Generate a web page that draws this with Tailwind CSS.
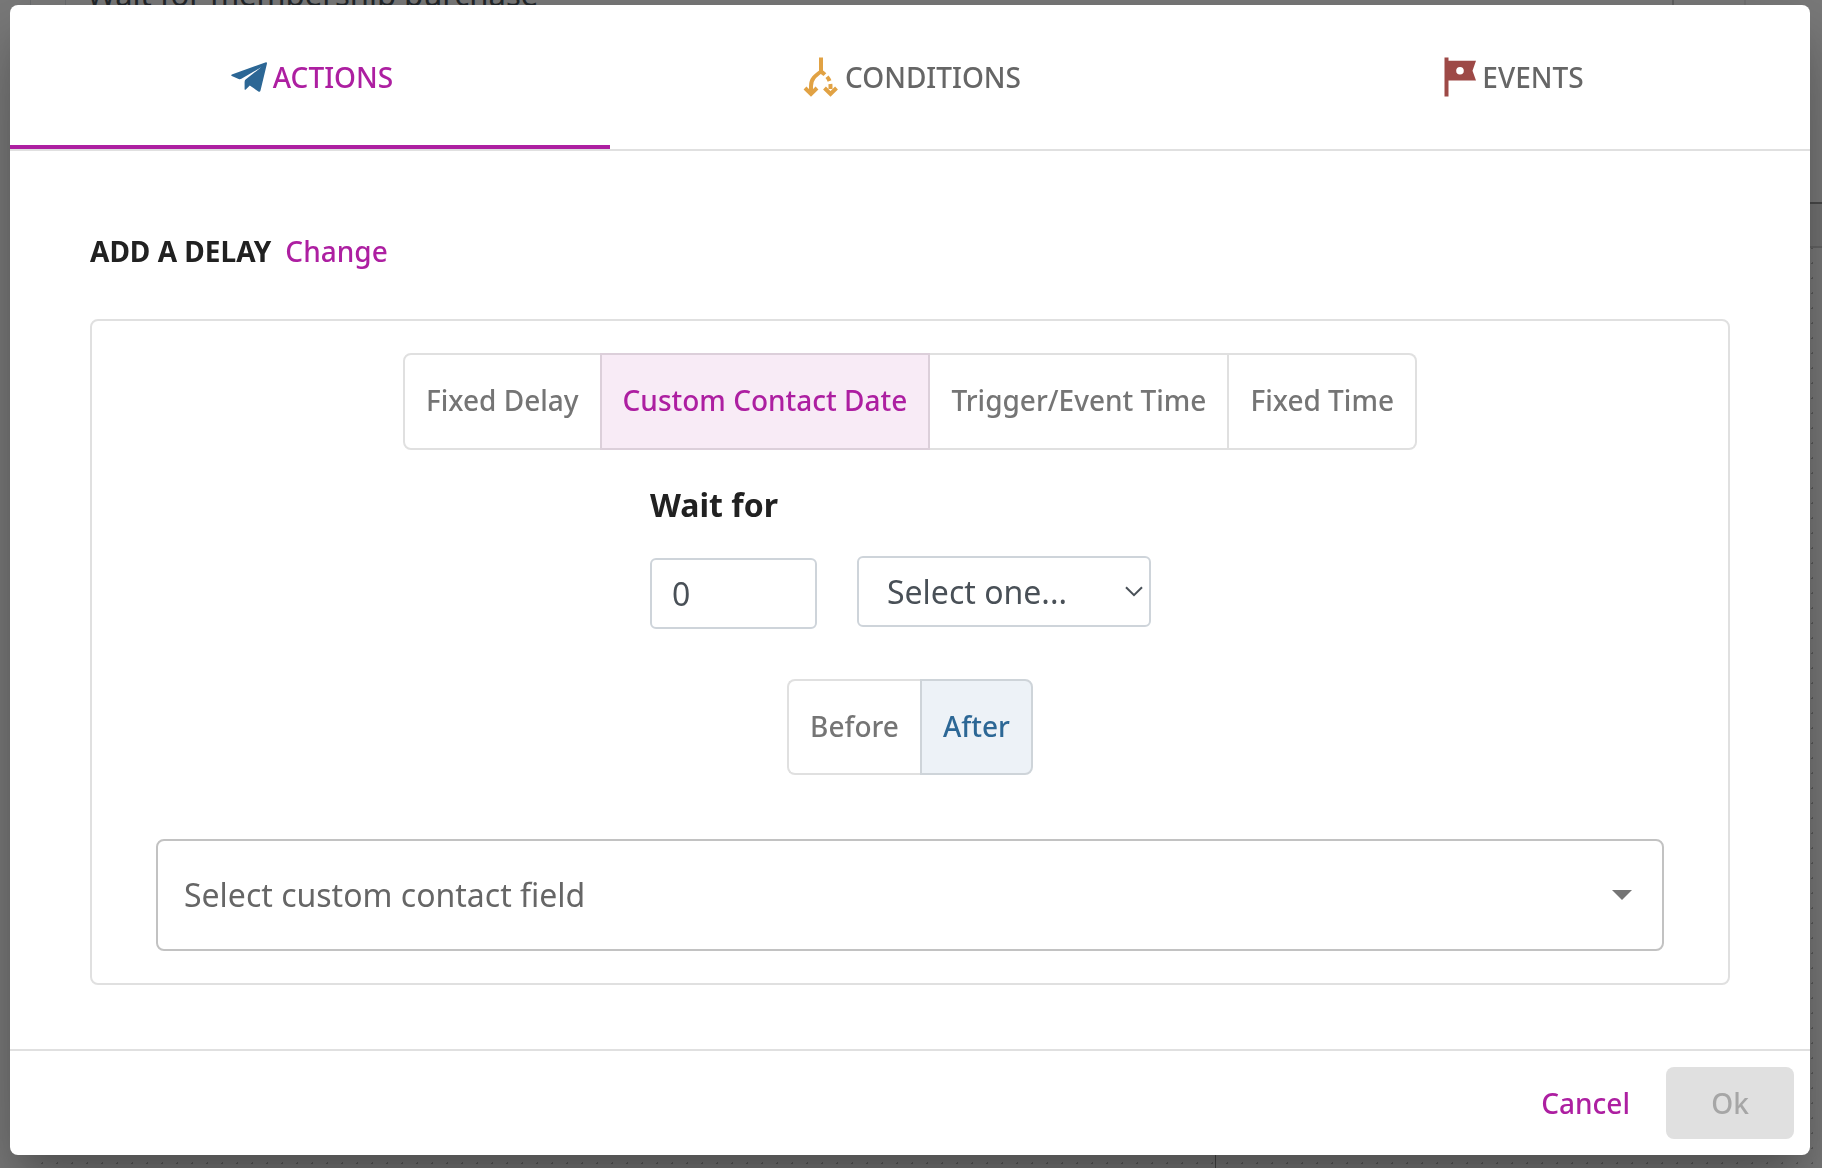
<!DOCTYPE html>
<html lang="en">
<head>
    <meta charset="UTF-8">
    <meta name="viewport" content="width=device-width, initial-scale=1.0">
    <title>Add a delay</title>
    <script src="https://cdn.jsdelivr.net/npm/@tailwindcss/browser@4"></script>
</head>
<body class="min-h-screen bg-[#7b7b7b] font-['Noto_Sans',sans-serif] text-[28px] leading-10 font-medium text-[#212121]">

    <!-- Workflow canvas behind the dialog -->
    <div class="fixed inset-y-0 right-0 left-[30px] overflow-hidden bg-[radial-gradient(circle,#5c5c5c_1px,transparent_1px)] bg-size-[15px_15px] bg-position-[5px_1px]" aria-hidden="true">
        <div class="absolute inset-x-0 top-0 h-[204px] border-b-2 border-[#4a4a4a] bg-[#7b7b7b]"></div>
        <div class="absolute inset-x-0 top-[204px] h-11 border-b-2 border-[#666] bg-[#757575]"></div>
        <div class="absolute top-0 left-0 h-40 w-9 border-x border-[#6c6e70]"></div>
        <div class="absolute top-0 right-[76px] h-40 w-[74px] border-x-2 border-r-[#727272] border-l-[#636363]"></div>
        <div class="absolute bottom-0 left-[1185px] h-10 w-px bg-[#484848]"></div>
        <p class="absolute -top-[26px] left-[57px] text-[31px] leading-10 font-normal text-[#24282b]">Wait for membership purchase</p>
    </div>

    <!-- Dialog -->
    <div role="dialog" aria-labelledby="dialogTitle" class="relative flex min-h-screen pt-[5px] pr-3 pb-[13px] pl-[10px]">
        <div class="flex grow flex-col rounded-lg bg-white shadow-[0_22px_30px_-14px_#00000033,0_48px_76px_6px_#00000024,0_18px_92px_16px_#0000001f]">

            <!-- Tabs -->
            <div role="tablist" class="grid h-[146px] grid-cols-3 border-b-2 border-[#e0e0e0] text-[#666]">
                <button role="tab" aria-selected="true" class="flex items-center justify-center gap-[6px] border-b-4 border-[#ad1fa1] pt-1 text-[#ad1fa1]">
                    <svg class="h-[30px] w-10" viewBox="-4 0 40 30" fill="#2c6795">
                        <path d="M35 0.2 L0.8 12.4 Q-0.3 13.2 0.8 14 L8.2 17.2 Q9.4 17.4 10.4 16.8 L30.2 5.2 L14.6 17.6 Q13.6 18.6 13.6 20 V27.2 Q13.9 28.4 14.8 27.4 L18.8 23.6 L27.4 29.4 Q29 30.2 29.5 28.4 L36 1.4 Q36 0 35 0.2 Z"/>
                    </svg>
                    ACTIONS
                </button>
                <button role="tab" aria-selected="false" class="flex items-center justify-center gap-[6px] border-b-4 border-transparent pt-1">
                    <svg class="h-10 w-10" viewBox="-4 0 40 40" fill="none" stroke="#e1a244" stroke-width="4">
                        <path d="M18 0.5 V14.5 C12 19 8 22 8 29 V36"/>
                        <path d="M2 31 L8 37 L14 31"/>
                        <path d="M18 14.5 Q27.5 21 27.5 29 V36" stroke-dasharray="5 3"/>
                        <path d="M21.5 31 L27.5 37 L33.5 31"/>
                    </svg>
                    CONDITIONS
                </button>
                <button role="tab" aria-selected="false" class="flex items-center justify-center gap-[6px] border-b-4 border-transparent pt-1">
                    <svg class="h-10 w-10" viewBox="-8 0 40 40" fill="#9d4946">
                        <path fill-rule="evenodd" d="M0.5 0.5 H4.5 V3.8 H32 L28.5 13.7 L32 23.6 H4.5 V39.5 H0.5 Z M16 10 A3.8 3.8 0 1 0 16 17.6 A3.8 3.8 0 1 0 16 10 Z"/>
                    </svg>
                    EVENTS
                </button>
            </div>

            <!-- Content -->
            <div class="flex grow flex-col px-20 pt-20 pb-16">
                <div class="flex items-center gap-[14px]">
                    <h1 id="dialogTitle" class="font-bold">ADD A DELAY</h1>
                    <button class="text-[#ad1fa1]">Change</button>
                </div>

                <div class="mt-12 flex flex-col items-center rounded-lg border-2 border-[#e0e0e0] px-16 py-8">
                    <div role="group" aria-label="Delay type" class="flex h-[97px] text-[#757575]">
                        <button class="rounded-l-lg border-2 border-[#e0e0e0] px-[21px] pb-[3px]">Fixed Delay</button>
                        <button aria-pressed="true" class="-ml-[2px] border-2 border-[#dccfda] bg-[#f8ebf6] px-[21px] pb-[3px] text-[#ad1fa1]">Custom Contact Date</button>
                        <button class="border-y-2 border-r-2 border-[#e0e0e0] px-[21px] pb-[3px]">Trigger/Event Time</button>
                        <button class="rounded-r-lg border-y-2 border-r-2 border-[#e0e0e0] px-[21px] pb-[3px]">Fixed Time</button>
                    </div>

                    <div class="mt-[31px] w-[520px] text-[32px] font-normal text-[#495057]">
                        <label for="waitAmount" class="block leading-12 font-bold text-[#212121]">Wait for</label>
                        <div class="mt-[27px] flex items-start gap-10">
                            <input id="waitAmount" type="text" inputmode="numeric" value="0" class="mt-[2px] h-[71px] w-[167px] rounded-md border-2 border-[#ced4da] px-5">
                            <div class="relative">
                                <select aria-label="Unit" class="h-[71px] w-[294px] appearance-none rounded-md border-2 border-[#ced4da] bg-white px-7">
                                    <option>Select one...</option>
                                    <option>Days</option>
                                </select>
                                <svg class="pointer-events-none absolute top-[30px] right-2 h-[11px] w-[18px]" viewBox="0 0 18 11" fill="none" stroke="#495057" stroke-width="2">
                                    <path d="M1 1.2 L9 9.2 L17 1.2"/>
                                </svg>
                            </div>
                        </div>
                    </div>

                    <div role="group" aria-label="Direction" class="mt-[50px] flex h-24 text-[#757575]">
                        <button class="rounded-l-lg border-y-2 border-l-2 border-[#e0e0e0] px-[21px] pb-[2px]">Before</button>
                        <button aria-pressed="true" class="rounded-r-lg border-2 border-[#ced4d9] bg-[#edf2f7] px-[21px] pb-[2px] text-[#2c6795]">After</button>
                    </div>

                    <div class="relative mt-16 w-full">
                        <select aria-label="Custom contact field" class="h-28 w-full appearance-none rounded-lg border-2 border-[#c2c2c2] bg-white px-[26px] text-[32px] font-normal text-[#666]">
                            <option>Select custom contact field</option>
                        </select>
                        <svg class="pointer-events-none absolute top-[51px] right-8 h-[10px] w-5" viewBox="0 0 20 10" fill="#757575">
                            <path d="M0 0 H20 L10 10 Z"/>
                        </svg>
                    </div>
                </div>
            </div>

            <!-- Footer -->
            <div class="flex justify-end gap-2 border-t-2 border-[#e0e0e0] p-4">
                <button class="h-[72px] px-7 text-[#ad1fa1]">Cancel</button>
                <button disabled class="h-[72px] w-32 rounded-lg bg-[#e0e0e0] text-[#a6a6a6]">Ok</button>
            </div>
        </div>
    </div>

</body>
</html>
